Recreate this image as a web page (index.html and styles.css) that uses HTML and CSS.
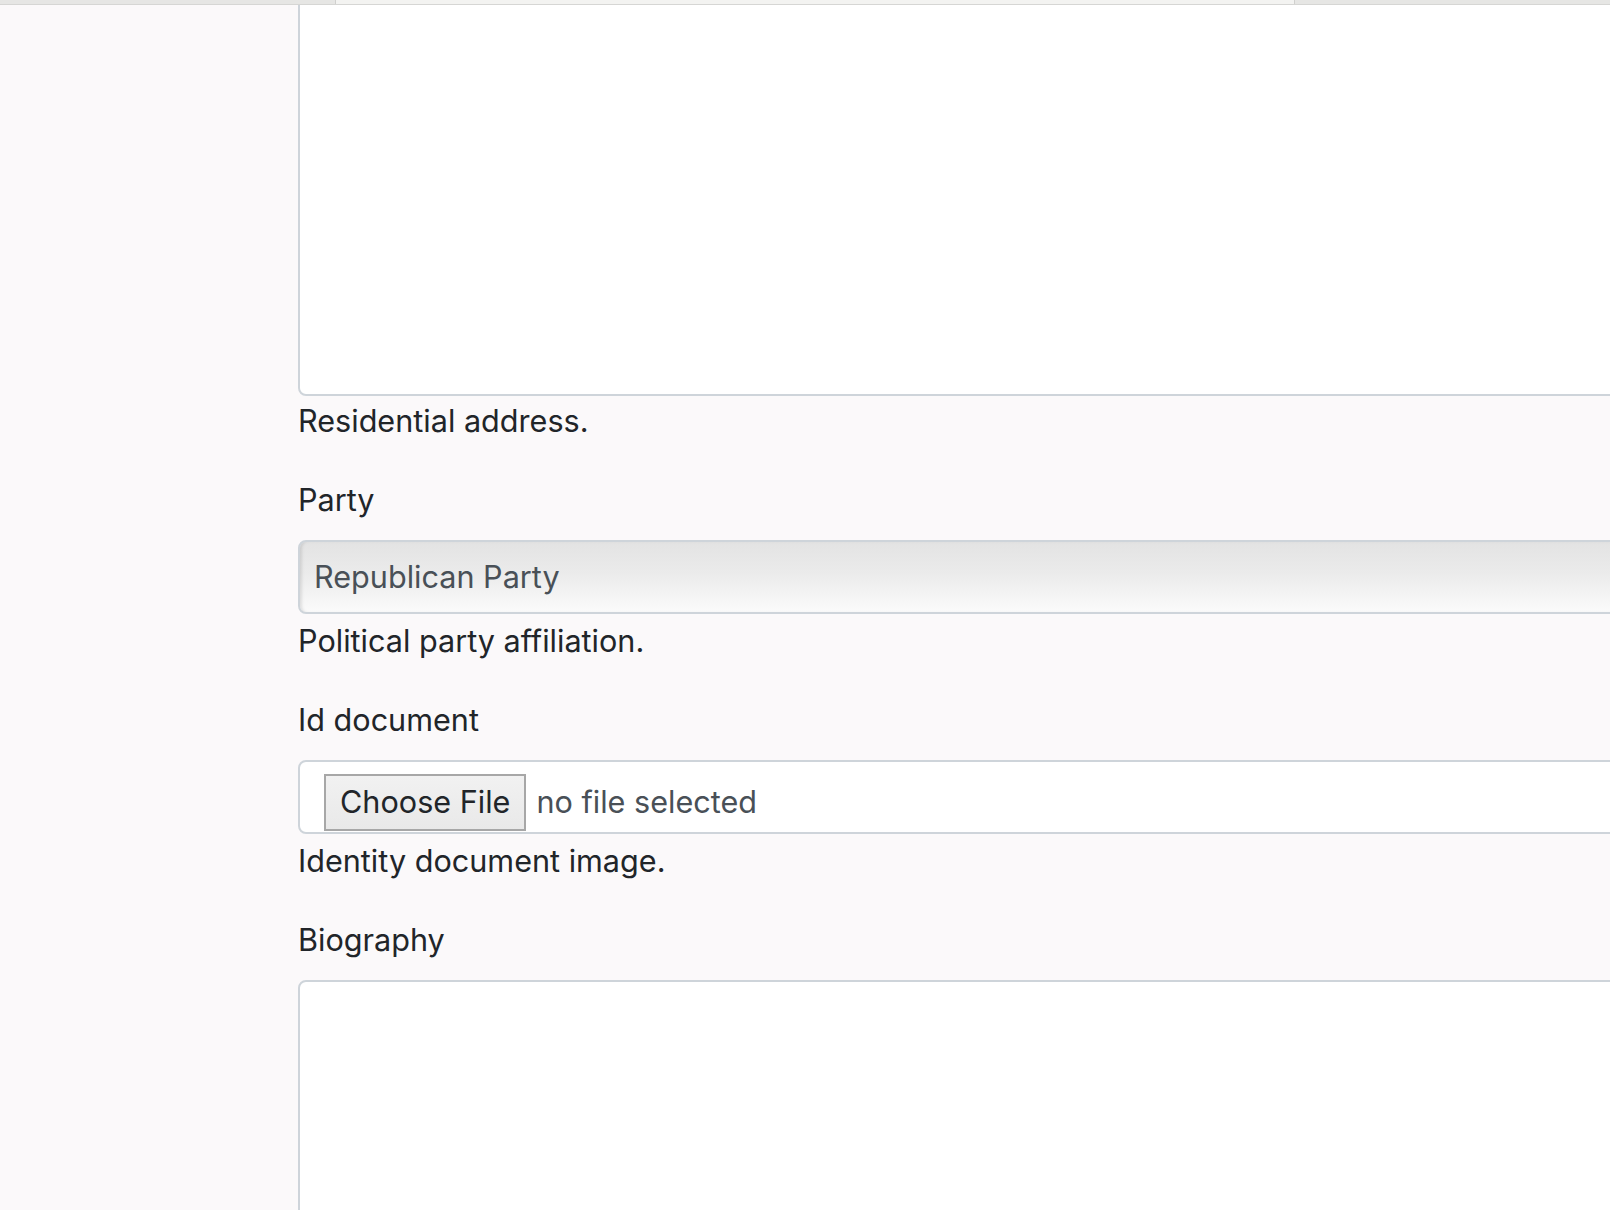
FILE: index.html
```html
<!DOCTYPE html>
<html lang="en">
<head>
<meta charset="utf-8">
<title>Candidate form</title>
<link rel="stylesheet" href="styles.css">
</head>
<body>
<div class="tabbar">
  <div class="tab tab-side"></div>
  <div class="tab tab-active"></div>
  <div class="tab tab-side tab-right"></div>
</div>
<main class="main">
  <form class="form">
    <div class="group">
      <textarea class="control textarea textarea-top"></textarea>
      <div class="help help-tight">Residential address.</div>
    </div>
    <div class="group">
      <label class="label">Party</label>
      <div class="control select">Republican Party</div>
      <div class="help">Political party affiliation.</div>
    </div>
    <div class="group">
      <label class="label">Id document</label>
      <div class="control file">
        <button type="button" class="file-btn">Choose File</button>
        <span class="file-name">no file selected</span>
      </div>
      <div class="help">Identity document image.</div>
    </div>
    <div class="group">
      <label class="label">Biography</label>
      <textarea class="control textarea textarea-bottom"></textarea>
    </div>
  </form>
</main>
</body>
</html>
```

FILE: styles.css
```css
html, body {
  margin: 0;
  padding: 0;
}
body {
  background: #fbf9fa;
  font-family: Inter, "Noto Sans", sans-serif;
  font-size: 30.6px;
  line-height: 46.5px;
  color: #212529;
  overflow: hidden;
  height: 1210px;
}
.tabbar {
  position: relative;
  z-index: 2;
  display: flex;
  height: 4px;
  border-bottom: 1px solid #d6d6d4;
}
.tab {
  background: #f3f3f1;
  flex: 1;
}
.tab-side {
  flex: 0 0 335px;
  background: #e6e6e4;
  border-right: 1px solid #d0d0ce;
}
.tab-right {
  flex: 0 0 315px;
  border-right: none;
  border-left: 1px solid #d0d0ce;
}
.main {
  margin-left: 298px;
  width: 1420px;
}
.form {
  margin: 0;
}
.group {
  margin-bottom: 32px;
}
.label {
  display: block;
  margin-bottom: 17px;
}
.help {
  margin-top: 4px;
}
.help-tight {
  margin-top: 2px;
}
.control {
  box-sizing: border-box;
  display: block;
  width: 100%;
  border: 2px solid #ced4da;
  border-radius: 8px;
  background: #fff;
  font: inherit;
  color: #495057;
}
.textarea {
  resize: none;
  padding: 12px 24px;
}
.textarea-top {
  height: 426px;
  margin-top: -35px;
}
.textarea-bottom {
  height: 400px;
}
.select {
  height: 74px;
  display: flex;
  align-items: center;
  padding: 0 14px;
  background: linear-gradient(to bottom, #e3e3e3 0%, #ebebeb 45%, #fbfbfb 100%);
  box-shadow: inset 3px 0 3px -1px rgba(0, 0, 0, 0.10);
}
.file {
  height: 74px;
  display: flex;
  align-items: flex-start;
  padding: 12px 24px 0;
}
.file-btn {
  box-sizing: border-box;
  height: 57px;
  margin: 0;
  padding: 0 14px;
  border: 2px solid #a7a7a7;
  border-radius: 0;
  background: linear-gradient(to bottom, #f1f1f1, #e9e9e9);
  font: inherit;
  line-height: 46.5px;
  color: #212529;
}
.file-name {
  margin-left: 10px;
  height: 57px;
  display: flex;
  align-items: center;
}
```
